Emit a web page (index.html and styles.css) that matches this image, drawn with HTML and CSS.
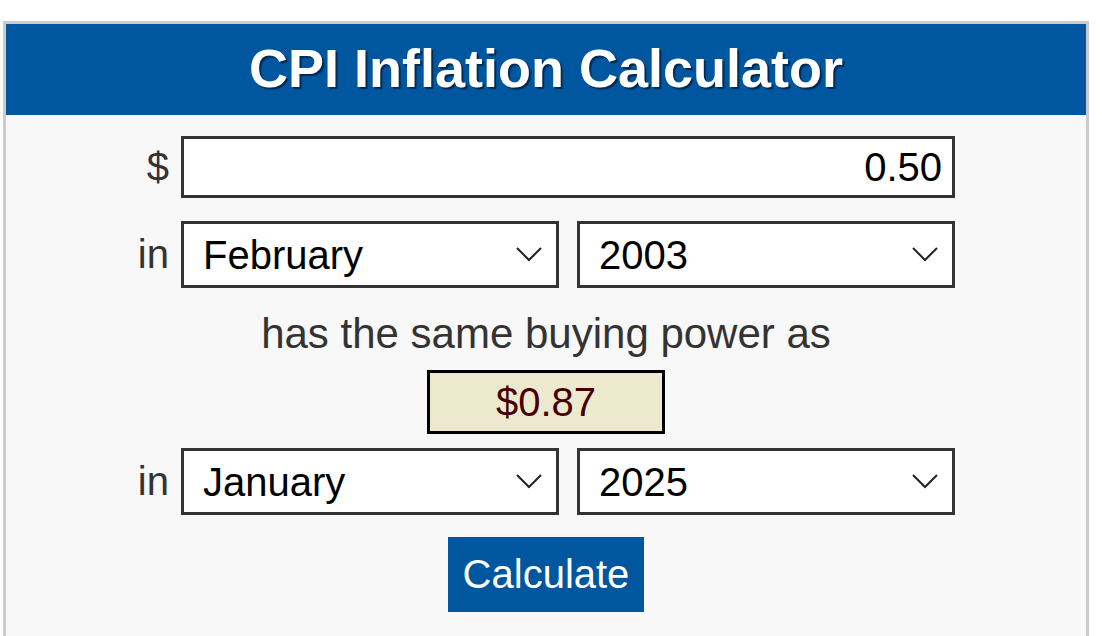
FILE: index.html
```html
<!DOCTYPE html>
<html lang="en">
<head>
    <meta charset="UTF-8">
    <meta name="viewport" content="width=device-width, initial-scale=1.0">
    <title>CPI Inflation Calculator</title>
    <link rel="stylesheet" href="styles.css">
</head>
<body>
    <div class="calc">
        <h1 class="calc-title">CPI Inflation Calculator</h1>

        <div class="calc-body">
            <div class="row">
                <span class="label">$</span>
                <input class="amount" type="text" value="0.50">
            </div>

            <div class="row row-select">
                <span class="label">in</span>
                <div class="fields">
                    <div class="select">
                        <select>
                            <option>February</option>
                        </select>
                        <svg class="chevron" width="26" height="15" viewBox="0 0 26 15"><path d="M1 1 L13 13 L25 1" fill="none" stroke="#222" stroke-width="2"/></svg>
                    </div>
                    <div class="select">
                        <select>
                            <option>2003</option>
                        </select>
                        <svg class="chevron" width="26" height="15" viewBox="0 0 26 15"><path d="M1 1 L13 13 L25 1" fill="none" stroke="#222" stroke-width="2"/></svg>
                    </div>
                </div>
            </div>

            <p class="same">has the same buying power as</p>
            <div class="answer">$0.87</div>

            <div class="row row-select row-last">
                <span class="label">in</span>
                <div class="fields">
                    <div class="select">
                        <select>
                            <option>January</option>
                        </select>
                        <svg class="chevron" width="26" height="15" viewBox="0 0 26 15"><path d="M1 1 L13 13 L25 1" fill="none" stroke="#222" stroke-width="2"/></svg>
                    </div>
                    <div class="select">
                        <select>
                            <option>2025</option>
                        </select>
                        <svg class="chevron" width="26" height="15" viewBox="0 0 26 15"><path d="M1 1 L13 13 L25 1" fill="none" stroke="#222" stroke-width="2"/></svg>
                    </div>
                </div>
            </div>

            <button class="btn" type="button">Calculate</button>
        </div>
    </div>
</body>
</html>
```

FILE: styles.css
```css
/* page */
body {
    margin: 0;
    background: #fff;
    font-family: 'Liberation Sans', Arial, sans-serif;
    color: #333;
}

.calc {
    margin: 21px 0 0 3px;
    width: 1086px;
    height: 640px;
    box-sizing: border-box;
    border: 3px solid #ccc;
    border-bottom: none;
    background: #f8f8f8;
}

.calc-title {
    margin: 0;
    height: 91px;
    padding-bottom: 2px;
    box-sizing: border-box;
    line-height: 89px;
    background: #0057a0;
    color: #fff;
    font-size: 54px;
    font-weight: bold;
    text-align: center;
    text-shadow: 2px 2px 1px #002a52;
}

.calc-body {
    display: flex;
    flex-direction: column;
    align-items: center;
    padding-top: 21px;
}

/* rows */
.row {
    display: flex;
    align-items: center;
    gap: 12px;
    width: 818px;
}

.row-select {
    margin-top: 23px;
}

.row-last {
    margin-top: 14px;
}

.label {
    width: 32px;
    flex-shrink: 0;
    text-align: right;
    font-size: 40px;
    color: #333;
}

.amount {
    width: 774px;
    height: 62px;
    box-sizing: border-box;
    border: 3px solid #333;
    border-radius: 0;
    background: #fff;
    padding: 0 10px 0 0;
    font-family: inherit;
    font-size: 40px;
    color: #000;
    text-align: right;
    outline: none;
}

.fields {
    display: flex;
    gap: 18px;
    width: 774px;
}

.select {
    position: relative;
    width: 378px;
}

.select select {
    -webkit-appearance: none;
    appearance: none;
    width: 100%;
    height: 67px;
    box-sizing: border-box;
    border: 3px solid #333;
    border-radius: 0;
    background: #fff;
    padding: 0 0 0 19px;
    font-family: inherit;
    font-size: 40px;
    color: #000;
    outline: none;
}

.chevron {
    position: absolute;
    right: 17px;
    top: 26px;
    pointer-events: none;
}

/* result */
.same {
    margin: 22px 0 0;
    font-size: 42px;
    line-height: 48px;
    color: #333;
}

.answer {
    margin-top: 12px;
    width: 238px;
    height: 64px;
    box-sizing: border-box;
    border: 3px solid #000;
    background: #ede9cf;
    color: #400;
    font-size: 40px;
    line-height: 58px;
    text-align: center;
}

.btn {
    margin-top: 22px;
    width: 196px;
    height: 75px;
    border: none;
    border-radius: 0;
    background: #0057a0;
    color: #fff;
    font-family: inherit;
    font-size: 40px;
    padding: 0;
    cursor: pointer;
}
```
